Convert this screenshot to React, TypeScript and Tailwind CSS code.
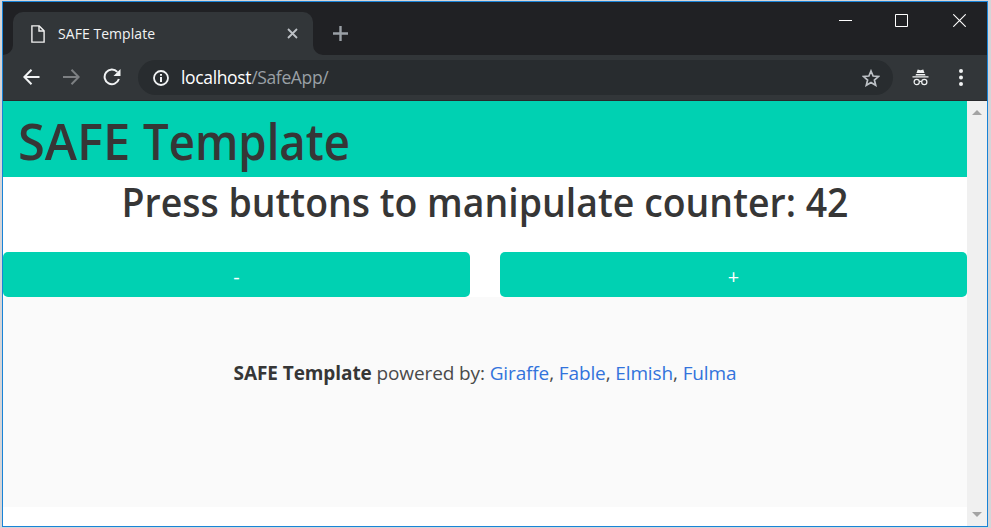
import React from "react";

const links = ["Giraffe", "Fable", "Elmish", "Fulma"];

function TabStrip() {
  return (
    <div className="flex h-[53px] shrink-0 items-end bg-[#202124]">
      <svg className="h-[10px] w-[10px] shrink-0 text-[#323639]" viewBox="0 0 10 10" fill="currentColor">
        <path d="M10 0v10H0A10 10 0 0 0 10 0z" />
      </svg>
      <div className="flex h-[43px] w-[300px] items-center rounded-t-[10px] bg-[#323639] pl-[18px]">
        <svg className="h-[18px] w-[14px]" viewBox="0 0 14 18" fill="none" stroke="#f1f1f1" strokeWidth="1.4">
          <path d="M.9.9h7.3l4.9 5v11.2H.9z" />
          <path d="M8 1v5h5" />
        </svg>
        <span className="ml-[13px] text-[14px] leading-[20px] tracking-[0.05px] whitespace-nowrap text-[#f1f3f4]">SAFE Template</span>
        <svg className="mr-[15px] ml-auto h-[11px] w-[11px]" viewBox="0 0 11 11" stroke="#bdc1c6" strokeWidth="1.8">
          <path d="M1 1l9 9M10 1l-9 9" />
        </svg>
      </div>
      <svg className="h-[10px] w-[10px] shrink-0 text-[#323639]" viewBox="0 0 10 10" fill="currentColor">
        <path d="M0 0v10h10A10 10 0 0 1 0 0z" />
      </svg>
      <svg className="mb-[14px] ml-[10px] h-[15px] w-[15px]" viewBox="0 0 15 15" stroke="#9aa0a6" strokeWidth="2.4">
        <path d="M7.5 0v15M0 7.5h15" />
      </svg>
      <div className="mr-[21px] ml-auto flex h-full gap-[43px] pt-[12px]">
        <svg className="h-[13px] w-[13px]" viewBox="0 0 13 13" stroke="#fff"><path d="M0 6.5h13" /></svg>
        <svg className="h-[13px] w-[13px]" viewBox="0 0 13 13" fill="none" stroke="#fff"><path d="M.5.5h12v12H.5z" /></svg>
        <svg className="ml-[2px] h-[13px] w-[13px]" viewBox="0 0 13 13" stroke="#fff" strokeWidth="1.1"><path d="M.3.3l12.4 12.4M12.7.3L.3 12.7" /></svg>
      </div>
    </div>
  );
}

function Toolbar() {
  return (
    <div className="flex h-[46px] shrink-0 items-center border-b border-[#28292c] bg-[#323639] pl-[20px]">
      <svg className="mb-[2px] h-[16px] w-[17px]" viewBox="0 0 17 16" fill="none" stroke="#f1f3f4" strokeWidth="2">
        <path d="M16.5 8H1.5M8.5.8L1.400 8l7.100 7.200" />
      </svg>
      <svg className="mb-[2px] ml-[23px] h-[16px] w-[17px]" viewBox="0 0 17 16" fill="none" stroke="#7d8083" strokeWidth="2">
        <path d="M0 8h15.5M8.5.8L15.6 8l-7.1 7.2" />
      </svg>
      <svg className="mb-[2px] ml-[23px] h-[18px] w-[18px]" viewBox="0 0 18 18" fill="none" stroke="#f1f3f4" strokeWidth="2">
        <path d="M14.3 3.9A7.3 7.3 0 1 0 15.9 11" />
        <path d="M17.5 1v7h-7z" fill="#f1f3f4" stroke="none" />
      </svg>
      <div className="ml-[17px] flex h-[35px] w-[755px] items-center rounded-full bg-[#282c2f] pl-[15px]">
        <svg className="h-[16px] w-[16px]" viewBox="0 0 16 16" fill="none" stroke="#f1f3f4" strokeWidth="1.8">
          <circle cx="8" cy="8" r="7" />
          <path d="M8 7v5M8 4v1.8" strokeWidth="2" />
        </svg>
        <span className="mb-[2px] ml-[12px] text-[17.5px] leading-[24px] tracking-[-0.35px] whitespace-nowrap text-[#9aa0a6]">
          <span className="text-white">localhost</span>/SafeApp/
        </span>
        <svg className="mr-[13px] ml-auto h-[18px] w-[18px]" viewBox="0 0 18 18" fill="none" stroke="#bdc1c6" strokeWidth="1.7">
          <path d="M9 2l2.1 5 5.4.5-4.1 3.5 1.3 5.3L9 13.5l-4.7 2.8L5.6 11 1.5 7.5 6.9 7z" />
        </svg>
      </div>
      <svg className="ml-[19px] h-[17px] w-[17px]" viewBox="0 0 17 17" fill="#f1f3f4">
        <path d="M5.7.6l2.8.7 2.8-.7L12.5 4h-8zM4 5h9l.5 1.4h-10zM.5 7.3h16v1.2H.5z" />
        <circle cx="4.7" cy="13" r="2.6" fill="none" stroke="#f1f3f4" strokeWidth="1.2" />
        <circle cx="12.3" cy="13" r="2.6" fill="none" stroke="#f1f3f4" strokeWidth="1.2" />
        <path d="M7.3 12.8q1.2-1 2.4 0" fill="none" stroke="#f1f3f4" strokeWidth="1.2" />
      </svg>
      <svg className="mb-px ml-[30px] h-[17px] w-[4px]" viewBox="0 0 4 17" fill="#f1f3f4">
        <circle cx="2" cy="2" r="2" />
        <circle cx="2" cy="8.5" r="2" />
        <circle cx="2" cy="15" r="2" />
      </svg>
    </div>
  );
}

function Page() {
  return (
    <main className="flex flex-1 flex-col bg-white text-[#363636]">
      <header className="flex h-[76px] items-center bg-[#00d1b2] pt-[4px] pl-[15px]">
        <h1 className="flex text-[50px] leading-[56px] font-semibold whitespace-pre">
          <span className="w-[125px] origin-left scale-x-[0.975]">{"SAFE "}</span>
          <span className="origin-left scale-x-[0.91]">Template</span>
        </h1>
      </header>
      <h2 className="flex h-[75px] scale-x-[0.936] justify-center pt-px text-[40px] leading-[48px] font-semibold whitespace-nowrap">
        Press buttons to manipulate counter: 42
      </h2>
      <div className="flex gap-[30px] text-[20px] leading-[24px] text-white">
        <button className="flex h-[45px] flex-1 items-center justify-center rounded-[5px] bg-[#00d1b2] pt-[4px]">-</button>
        <button className="flex h-[45px] flex-1 items-center justify-center rounded-[5px] bg-[#00d1b2] pt-[4px]">+</button>
      </div>
      <footer className="flex h-[210px] justify-center bg-[#fafafa] pt-[61px] text-[19px] leading-[30px] whitespace-nowrap text-[#4a4a4a]">
        <p>
          <strong className="font-bold tracking-[-0.08px] text-[#363636]">SAFE Template</strong>
          <span className="tracking-[-0.12px]">
            {" powered by: "}
            {links.map((name, i) => (
              <React.Fragment key={name}>
                {i > 0 && ", "}
                <a className="text-[#3273dc]">{name}</a>
              </React.Fragment>
            ))}
          </span>
        </p>
      </footer>
    </main>
  );
}

function Scrollbar() {
  return (
    <div className="flex w-[20px] shrink-0 flex-col items-center justify-between bg-[#f0f0f0] pt-[9px] pb-[9px]">
      <svg className="h-[5px] w-[10px]" viewBox="0 0 10 5" fill="#a3a3a3"><path d="M5 0l5 5H0z" /></svg>
      <svg className="h-[5px] w-[10px]" viewBox="0 0 10 5" fill="#a3a3a3"><path d="M0 0h10L5 5z" /></svg>
    </div>
  );
}

export default function App() {
  return (
    <div className="h-[528px] w-[991px] overflow-hidden bg-[#d5d5d8] pt-px pl-[2px] font-['Open_Sans','Noto_Sans',sans-serif]">
      <div className="flex h-[526px] w-[986px] flex-col border border-[#1883d7]">
        <TabStrip />
        <Toolbar />
        <div className="flex min-h-0 flex-1">
          <Page />
          <Scrollbar />
        </div>
      </div>
    </div>
  );
}
